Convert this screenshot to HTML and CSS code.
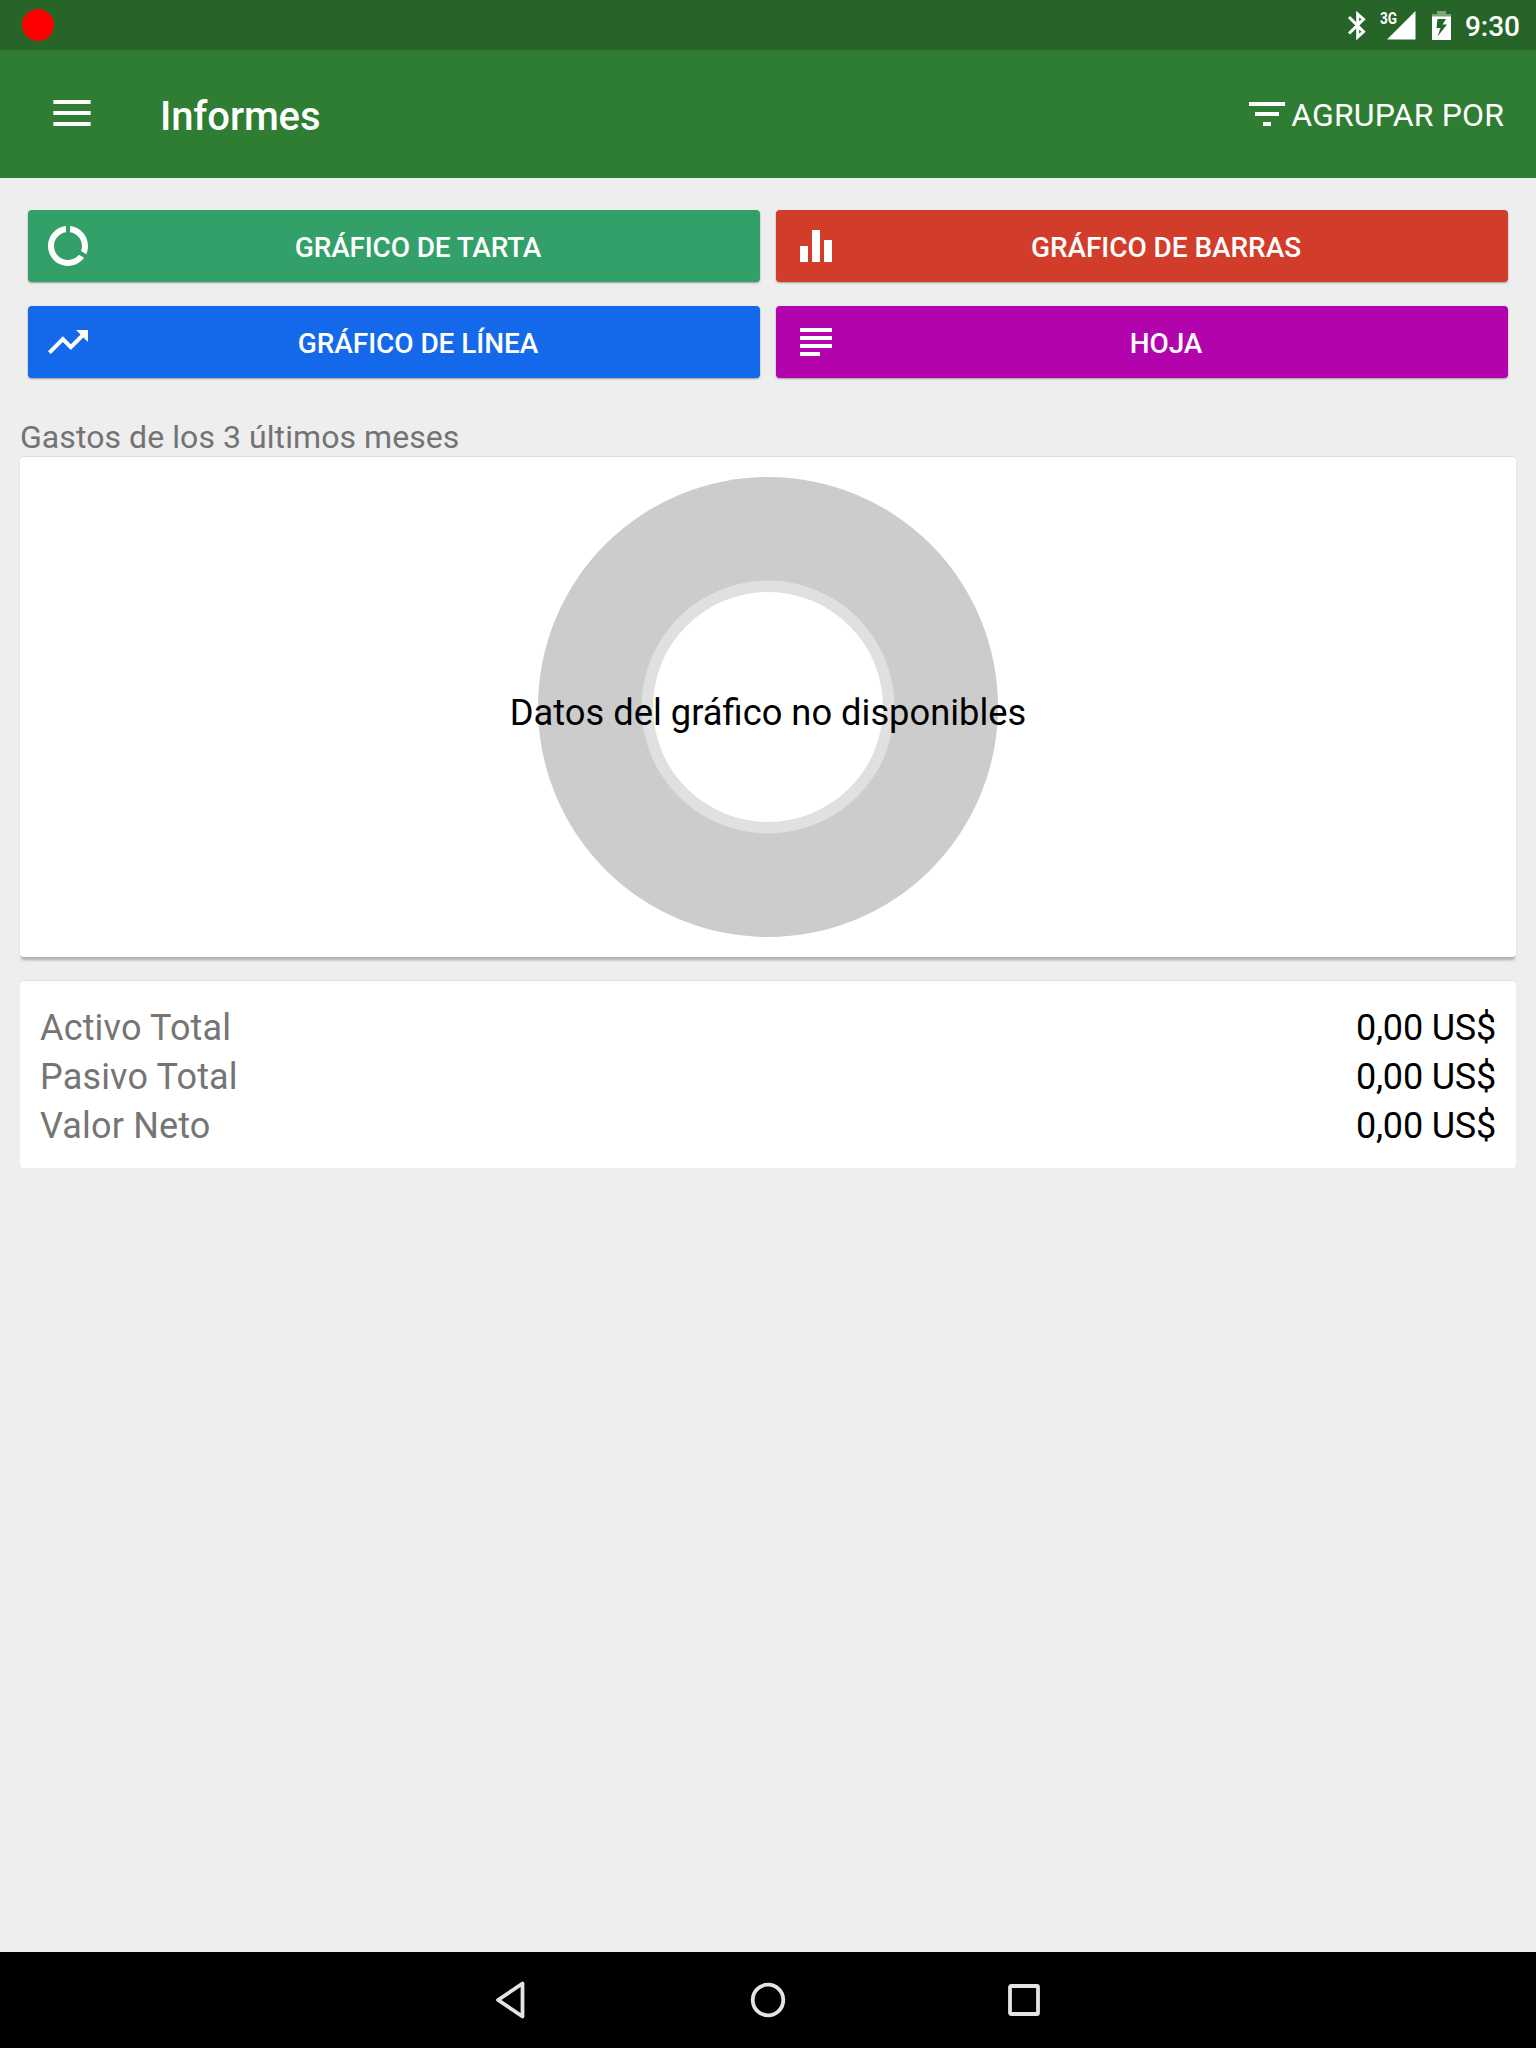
FILE: index.html
```html
<!DOCTYPE html>
<html lang="es">
<head>
<meta charset="utf-8">
<title>Informes</title>
<link rel="stylesheet" href="styles.css">
</head>
<body>
<div class="screen">
  <div class="status-bar">
    <span class="record-dot"></span>
    <div class="status-icons">
      <svg class="icon-bluetooth" width="20" height="30" viewBox="0 0 20 30"><path d="M2 7L16.500 21.800L10.700 27V4L16.500 9.200L2 23.500" fill="none" stroke="#fff" stroke-width="3"/></svg>
      <span class="signal"><span class="signal-label">3G</span><svg width="29" height="29" viewBox="0 0 29 29"><path d="M28.500 0V28.500H0z" fill="#fff"/></svg></span>
      <svg class="icon-battery" width="19" height="29" viewBox="0 0 19 29"><path d="M5 0h9v3h5v3H0V3h5z" fill="#fff" opacity=".4"/><path fill="#fff" fill-rule="evenodd" d="M0 5.500h19V29H0zM5.500 8L4.500 17H8.500L5.500 25.500L15 13.500H10.500L14 8z"/></svg>
      <span class="clock">9:30</span>
    </div>
  </div>
  <header class="toolbar">
    <svg class="menu-icon" width="38" height="26" viewBox="0 0 38 26"><path fill="#fff" d="M.3 0h37.400v4H.3zM.3 11h37.400v4H.3zM.3 22h37.400v4H.3z"/></svg>
    <h1 class="title">Informes</h1>
    <div class="group-by">
      <svg width="48" height="48" viewBox="0 0 24 24"><path fill="#fff" d="M10 18h4v-2h-4v2zM3 6v2h18V6H3zm3 7h12v-2H6v2z"/></svg>
      <span>AGRUPAR POR</span>
    </div>
  </header>
  <main class="content">
    <div class="buttons">
      <div class="button pie">
        <svg width="48" height="48" viewBox="0 0 24 24"><path fill="#fff" d="M13 2.050v3.030c3.390.49 6 3.390 6 6.920 0 .9-.18 1.750-.48 2.540l2.600 1.530c.56-1.240.88-2.620.88-4.070 0-5.180-3.950-9.450-9-9.950zM12 19c-3.870 0-7-3.130-7-7 0-3.530 2.610-6.430 6-6.920V2.050c-5.060.5-9 4.760-9 9.950 0 5.520 4.470 10 9.990 10 3.310 0 6.240-1.610 8.060-4.090l-2.600-1.530C16.170 17.980 14.210 19 12 19z"/></svg>
        <span>GRÁFICO DE TARTA</span>
      </div>
      <div class="button bar">
        <svg width="48" height="48" viewBox="0 0 24 24"><path fill="#fff" d="M10 20h4V4h-4v16zm-6 0h4v-8H4v8zM16 9v11h4V9h-4z"/></svg>
        <span>GRÁFICO DE BARRAS</span>
      </div>
      <div class="button line">
        <svg width="48" height="48" viewBox="0 0 24 24"><path fill="#fff" d="M16 6l2.290 2.290-4.880 4.880-4-4L2 16.590 3.410 18l6-6 4 4 6.300-6.290L22 12V6z"/></svg>
        <span>GRÁFICO DE LÍNEA</span>
      </div>
      <div class="button sheet">
        <svg width="48" height="48" viewBox="0 0 24 24"><path fill="#fff" d="M4 5h16v2H4zM4 9h16v2H4zM4 13h16v2H4zM4 17h10v2H4z"/></svg>
        <span>HOJA</span>
      </div>
    </div>
    <h2 class="section-title">Gastos de los 3 últimos meses</h2>
    <section class="card chart">
      <svg class="donut" width="460" height="460" viewBox="0 0 460 460"><circle cx="230" cy="230" r="230" fill="#ccc"/><circle cx="230" cy="230" r="126.500" fill="#e0e0e0"/><circle cx="230" cy="230" r="115" fill="#fff"/></svg>
      <span class="chart-message">Datos del gráfico no disponibles</span>
    </section>
    <section class="card totals">
      <div class="row"><span class="label">Activo Total</span><span class="amount">0,00 US$</span></div>
      <div class="row"><span class="label">Pasivo Total</span><span class="amount">0,00 US$</span></div>
      <div class="row"><span class="label">Valor Neto</span><span class="amount">0,00 US$</span></div>
    </section>
  </main>
  <nav class="nav-bar">
    <svg width="40" height="40" viewBox="0 0 40 40"><path d="M6 20L30.500 3.500V36.500z" fill="none" stroke="#e4e4e4" stroke-width="3.800" stroke-linejoin="round"/></svg>
    <svg width="40" height="40" viewBox="0 0 40 40"><circle cx="20" cy="20" r="15.300" fill="none" stroke="#e4e4e4" stroke-width="3.800"/></svg>
    <svg width="40" height="40" viewBox="0 0 40 40"><rect x="6" y="6" width="28" height="28" rx="1" fill="none" stroke="#e4e4e4" stroke-width="3.800"/></svg>
  </nav>
</div>
</body>
</html>
```
FILE: styles.css
```css
* { box-sizing: border-box; }

body {
  margin: 0;
  font-family: Roboto, "Liberation Sans", sans-serif;
  background: #eee;
}

svg { display: block; flex: none; }

.screen {
  display: flex;
  flex-direction: column;
  width: 1536px;
  height: 2048px;
  overflow: hidden;
}

.status-bar {
  display: flex;
  justify-content: space-between;
  align-items: center;
  height: 50px;
  padding: 0 16px 0 22px;
  background: #266428;
  color: #fff;
}

.record-dot {
  width: 32px;
  height: 32px;
  border-radius: 50%;
  background: #f00;
}

.status-icons { display: flex; align-items: center; }

.signal {
  position: relative;
  margin: 0 16px 0 20px;
}

.signal-label {
  position: absolute;
  left: -7px;
  top: -1px;
  font-size: 17px;
  line-height: 16px;
  font-weight: 700;
  transform: scaleX(.8);
  transform-origin: left;
}

.clock {
  margin-left: 14px;
  font-size: 28px;
  line-height: 34px;
  font-weight: 500;
  padding-top: 3px;
}

.toolbar {
  display: flex;
  align-items: center;
  height: 128px;
  padding: 0 32px 0 53px;
  background: #2e7d32;
  color: #fff;
}

.menu-icon { margin-top: -2px; }

.title {
  margin: 6px 0 0 69px;
  font-size: 40px;
  line-height: 48px;
  font-weight: 500;
  letter-spacing: -.13px;
}

.group-by {
  display: flex;
  align-items: center;
  margin-left: auto;
  font-size: 32px;
  line-height: 38px;
  letter-spacing: .12px;
}

.group-by span { padding-top: 2px; }

.content {
  flex: 1;
  padding: 32px 20px 0;
}

.buttons {
  display: grid;
  grid-template-columns: 1fr 1fr;
  gap: 24px 16px;
  padding: 0 8px;
}

.button {
  display: flex;
  align-items: center;
  height: 72px;
  padding: 0 16px;
  border-radius: 4px;
  box-shadow: 0 1px 2px rgba(0, 0, 0, .35);
  color: #fff;
  font-size: 28px;
  line-height: 34px;
  font-weight: 500;
  letter-spacing: -.06px;
}

.button span { flex: 1; text-align: center; padding-top: 4px; }

.pie { background: #339f69; letter-spacing: -.15px; }
.bar { background: #d13d2a; }
.line { background: #1469eb; }
.sheet { background: #b303ac; }

.section-title {
  margin: 40px 0 0;
  height: 39px;
  font-size: 32px;
  line-height: 38px;
  font-weight: 400;
  letter-spacing: .07px;
  color: #737373;
}

.card {
  background: #fff;
  border-radius: 4px;
}

.chart {
  position: relative;
  display: flex;
  justify-content: center;
  align-items: center;
  height: 500px;
  box-shadow: 0 -1px 0 #dcdcdc, 0 4px 3px -1px rgba(0, 0, 0, .28);
}

.chart-message {
  position: absolute;
  left: 0;
  right: 0;
  top: 234px;
  text-align: center;
  font-size: 36.300px;
  line-height: 44px;
  color: #000;
}

.totals {
  height: 187px;
  margin-top: 24px;
  padding: 23px 20px 0;
  box-shadow: 0 -1px 0 #dfdfdf;
  font-size: 36px;
  line-height: 49px;
  color: #000;
}

.row { display: flex; justify-content: space-between; }

.label { color: #757575; letter-spacing: .17px; }

.amount { letter-spacing: -.2px; }

.nav-bar {
  display: flex;
  justify-content: center;
  align-items: center;
  gap: 216px;
  height: 96px;
  background: #000;
}
```
